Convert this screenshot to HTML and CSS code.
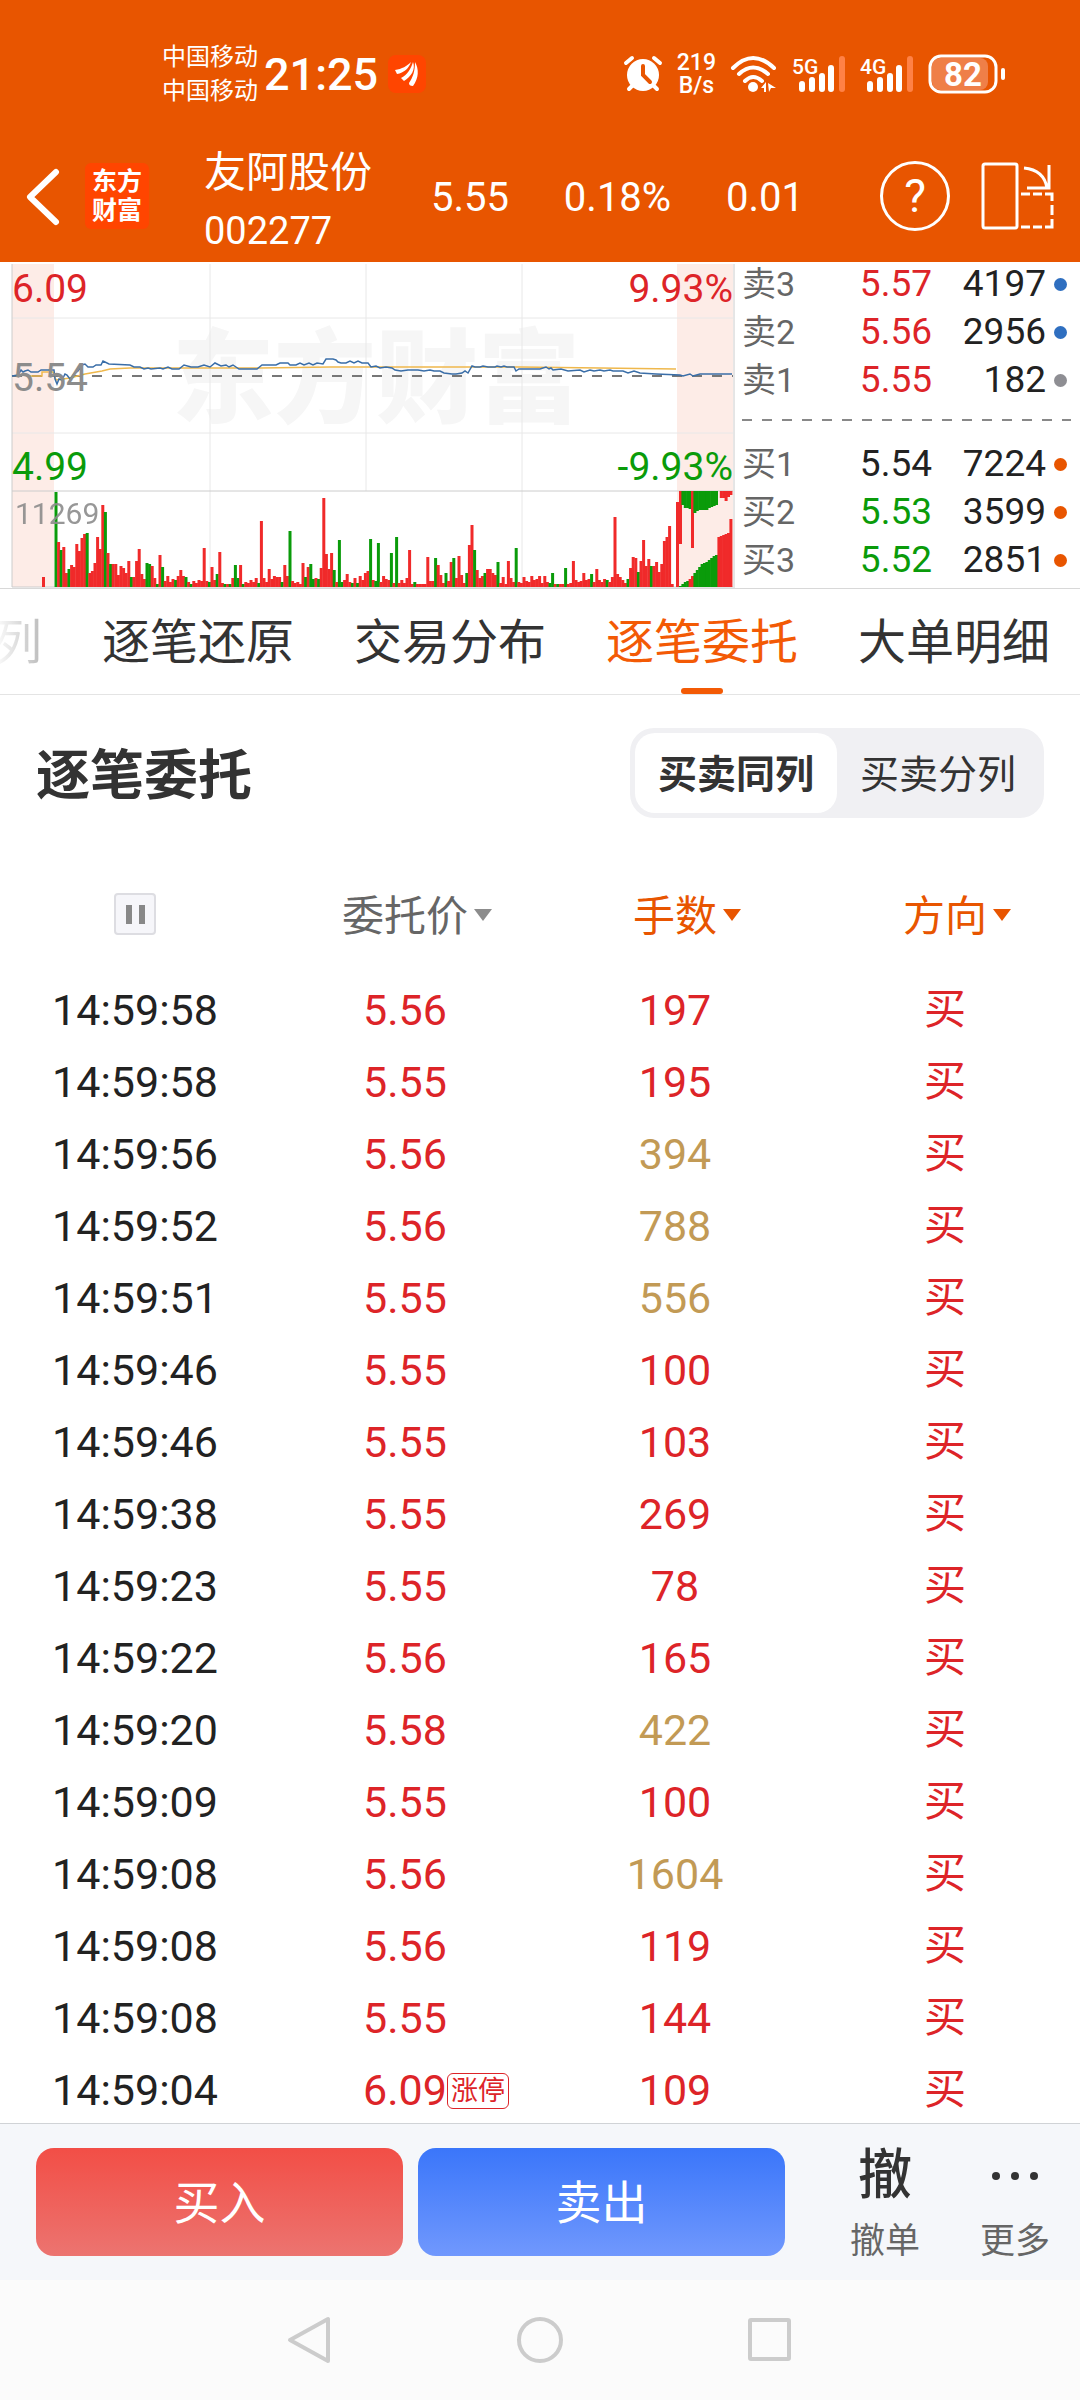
FILE: index.html
```html
<!DOCTYPE html>
<html lang="zh-CN">
<head>
    <meta charset="UTF-8">
    <meta name="viewport" content="width=device-width, initial-scale=1.0">
    <title>友阿股份 002277</title>
    <link rel="stylesheet" href="styles.css">
</head>
<body>
    <div class="status-bar">
        <div class="carriers">
            <span>中国移动</span>
            <span>中国移动</span>
        </div>
        <span class="clock">21:25</span>
        <svg class="app-badge" width="38" height="38" viewBox="0 0 38 38">
            <rect width="38" height="38" rx="8" fill="#ff4500"/>
            <path d="M7 15C14 14 19 11 23 7C21 13 16 18 9 19Z" fill="#fff"/>
            <path d="M13 23C19 20 23 14 25 7C28 14 23 22 16 26Z" fill="#fff"/>
            <path d="M21 28C25 22 27 16 27 7C31 14 31 23 25 31C22 31 21 30 21 28Z" fill="#fff"/>
        </svg>

        <div class="status-icons">
            <svg width="40" height="40" viewBox="0 0 40 40">
                <circle cx="20" cy="21" r="16" fill="#fff"/>
                <path d="M3 9L9 4M37 9L31 4M9 32L6 35M31 32L34 35" stroke="#fff" stroke-width="4" stroke-linecap="round"/>
                <path d="M20 12V21L27 28" fill="none" stroke="#e85500" stroke-width="4" stroke-linecap="round"/>
            </svg>
            <div class="net-speed">
                <span>219</span>
                <span>B/s</span>
            </div>
            <svg width="48" height="40" viewBox="0 0 48 40">
                <g fill="none" stroke="#fff" stroke-width="4" stroke-linecap="round">
                    <path d="M3 14Q23 -6 44 14"/>
                    <path d="M9 20Q23 7 38 20"/>
                    <path d="M15 27Q23 19 32 27"/>
                </g>
                <circle cx="23" cy="33" r="5" fill="#fff"/>
                <path d="M31 34L36 28V38H34V34ZM38 29L46 34H41L39 38Z" fill="#fff"/>
            </svg>
            <svg class="signal" width="54" height="40" viewBox="0 0 54 40">
                <text x="0" y="20">5G</text>
                <path d="M10 30V35M20 26V35M30 22V35M39 14V35" stroke="#fff" stroke-width="6" stroke-linecap="round"/>
                <path d="M50 5V35" stroke="#ff8146" stroke-width="6" stroke-linecap="round"/>
            </svg>
            <svg class="signal" width="54" height="40" viewBox="0 0 54 40">
                <text x="0" y="20">4G</text>
                <path d="M10 30V35M20 26V35M30 22V35M39 14V35" stroke="#fff" stroke-width="6" stroke-linecap="round"/>
                <path d="M50 5V35" stroke="#ff8146" stroke-width="6" stroke-linecap="round"/>
            </svg>
            <svg class="battery" width="78" height="40" viewBox="0 0 78 40">
                <rect x="4" y="4" width="56" height="32" rx="8" fill="#ef7f48"/>
                <rect x="2" y="2" width="66" height="36" rx="11" fill="none" stroke="#fff" stroke-width="3"/>
                <rect x="73" y="14" width="4" height="12" rx="2" fill="#fff"/>
                <text x="35" y="32" text-anchor="middle">82</text>
            </svg>
        </div>
    </div>

    <header class="stock-header">
        <button class="icon-button back" aria-label="返回">
            <svg width="36" height="60" viewBox="0 0 36 60"><path d="M32 6L6 31L32 56" fill="none" stroke="#fff" stroke-width="6" stroke-linecap="round" stroke-linejoin="round"/></svg>
        </button>
        <div class="brand"><span>东方</span><span>财富</span></div>
        <div class="stock-name">
            <h1>友阿股份</h1>
            <span>002277</span>
        </div>
        <div class="quote">
            <span>5.55</span>
            <span>0.18%</span>
            <span>0.01</span>
        </div>
        <button class="icon-button help" aria-label="帮助">?</button>
        <button class="icon-button rotate" aria-label="横屏">
            <svg width="76" height="70" viewBox="0 0 76 70">
                <g fill="none" stroke="#fff" stroke-width="3">
                    <rect x="3" y="3" width="34" height="64" rx="2"/>
                    <path d="M44 7Q64 9 67 27M47 27H69V4"/>
                    <path d="M41 33H50M53 33H62M65 33H72V40M72 44V54M72 58V66H65M62 66H53M50 66H41"/>
                </g>
            </svg>
        </button>
    </header>

    <section class="market">
        <svg class="chart" viewBox="0 0 735 326">
            <rect class="auction" x="12" y="2" width="42" height="323"/>
            <rect class="auction" x="677" y="2" width="56" height="323"/>
            <text class="watermark" x="172" y="153">东方财富</text>
            <path class="grid" d="M12 56H733M12 171H733M210 2V229M366 2V229M522 2V325M210 229V325"/>
            <path class="grid-strong" d="M12 2V325M12 229H733M12 325H733M734 2V326"/>
            <path class="prev-close" d="M12 114H733"/>
            <polyline class="average" points="28,114 42,114 42,110 53,110 56,118 70,116 85,112 102,109 110,107 130,106 260,106 330,105 370,105 520,105 600,106 676,107"/>
            <polyline class="price" points="12,114 18,113 21,108 23,110 25,109 28,108 31,110 38,110 41,108 54,108 55,117 57,122 59,117 62,118 65,112 67,113 70,117 74,112 78,109 82,103 85,102 88,105 93,105 96,103 101,103 103,99 109,102 130,103 134,105 140,105 144,107 148,106 151,107 160,106 163,107 168,105 172,107 179,107 184,103 191,105 198,105 204,103 210,105 215,101 221,104 226,103 229,105 233,103 239,107 257,107 262,103 276,103 280,101 288,101 290,103 296,103 300,101 304,103 309,101 313,103 317,101 323,102 326,97 333,97 336,98 338,100 341,101 346,101 350,99 354,101 358,99 362,101 368,101 371,105 376,104 380,106 386,105 392,106 395,108 401,109 408,108 418,108 424,109 430,108 434,109 440,109 444,111 452,112 456,112 462,111 465,109 468,111 472,104 475,105 480,105 483,104 488,105 495,105 497,104 501,105 504,104 507,105 514,105 516,109 519,107 540,107 546,105 549,107 551,106 553,108 561,107 568,109 580,108 584,110 590,108 594,109 600,108 604,109 610,108 613,109 623,109 628,111 634,109 640,111 656,112 680,113 683,114 690,112 693,114 700,112 732,112"/>
            <g id="volume"></g>
            <text class="axis up" x="12" y="40">6.09</text>
            <text class="axis flat" x="12" y="129">5.54</text>
            <text class="axis down" x="12" y="218">4.99</text>
            <text class="axis up" x="733" y="40" text-anchor="end">9.93%</text>
            <text class="axis down" x="733" y="218" text-anchor="end">-9.93%</text>
            <text class="volume-max" x="15" y="262">11269</text>
        </svg>

        <div class="order-book">
            <ul>
                <li><span class="level">卖3</span><span class="up">5.57</span><span>4197</span><i class="dot blue"></i></li>
                <li><span class="level">卖2</span><span class="up">5.56</span><span>2956</span><i class="dot blue"></i></li>
                <li><span class="level">卖1</span><span class="up">5.55</span><span>182</span><i class="dot gray"></i></li>
            </ul>
            <div class="book-divider"></div>
            <ul>
                <li><span class="level">买1</span><span>5.54</span><span>7224</span><i class="dot"></i></li>
                <li><span class="level">买2</span><span class="down">5.53</span><span>3599</span><i class="dot"></i></li>
                <li><span class="level">买3</span><span class="down">5.52</span><span>2851</span><i class="dot"></i></li>
            </ul>
        </div>
    </section>

    <nav class="tabs">
        <a href="#" class="faded">列</a>
        <a href="#">逐笔还原</a>
        <a href="#">交易分布</a>
        <a href="#" class="active">逐笔委托</a>
        <a href="#">大单明细</a>
    </nav>

    <main class="orders">
        <div class="orders-title">
            <h2>逐笔委托</h2>
            <div class="segmented">
                <button class="selected">买卖同列</button>
                <button>买卖分列</button>
            </div>
        </div>

        <table>
            <thead>
                <tr>
                    <th><button class="pause" aria-label="暂停"></button></th>
                    <th><button class="sort">委托价</button></th>
                    <th><button class="sort on">手数</button></th>
                    <th><button class="sort on">方向</button></th>
                </tr>
            </thead>
            <tbody>
                <tr><td>14:59:58</td><td>5.56</td><td>197</td><td>买</td></tr>
                <tr><td>14:59:58</td><td>5.55</td><td>195</td><td>买</td></tr>
                <tr><td>14:59:56</td><td>5.56</td><td class="large">394</td><td>买</td></tr>
                <tr><td>14:59:52</td><td>5.56</td><td class="large">788</td><td>买</td></tr>
                <tr><td>14:59:51</td><td>5.55</td><td class="large">556</td><td>买</td></tr>
                <tr><td>14:59:46</td><td>5.55</td><td>100</td><td>买</td></tr>
                <tr><td>14:59:46</td><td>5.55</td><td>103</td><td>买</td></tr>
                <tr><td>14:59:38</td><td>5.55</td><td>269</td><td>买</td></tr>
                <tr><td>14:59:23</td><td>5.55</td><td>78</td><td>买</td></tr>
                <tr><td>14:59:22</td><td>5.56</td><td>165</td><td>买</td></tr>
                <tr><td>14:59:20</td><td>5.58</td><td class="large">422</td><td>买</td></tr>
                <tr><td>14:59:09</td><td>5.55</td><td>100</td><td>买</td></tr>
                <tr><td>14:59:08</td><td>5.56</td><td class="large">1604</td><td>买</td></tr>
                <tr><td>14:59:08</td><td>5.56</td><td>119</td><td>买</td></tr>
                <tr><td>14:59:08</td><td>5.55</td><td>144</td><td>买</td></tr>
                <tr><td>14:59:04</td><td><span class="tagged">6.09<span class="tag">涨停</span></span></td><td>109</td><td>买</td></tr>
            </tbody>
        </table>
    </main>

    <footer class="trade-bar">
        <button class="trade buy">买入</button>
        <button class="trade sell">卖出</button>
        <div class="actions">
            <button class="action"><span class="action-icon">撤</span><span>撤单</span></button>
            <button class="action">
                <span class="action-icon"><svg width="48" height="10" viewBox="0 0 48 10"><g fill="#333"><circle cx="5" cy="5" r="4"/><circle cx="24" cy="5" r="4"/><circle cx="43" cy="5" r="4"/></g></svg></span>
                <span>更多</span>
            </button>
        </div>
    </footer>

    <div class="system-nav">
        <svg viewBox="0 0 48 48"><path d="M42 3V45L4 24Z"/></svg>
        <svg viewBox="0 0 48 48"><circle cx="24" cy="24" r="21"/></svg>
        <svg viewBox="0 0 48 48"><rect x="4" y="4" width="39" height="39" rx="1"/></svg>
    </div>

    <script src="chart.js"></script>
</body>
</html>
```
FILE: styles.css
```css
* {
    box-sizing: border-box;
}

body {
    margin: 0;
    height: 100vh;
    display: flex;
    flex-direction: column;
    overflow: hidden;
    font-family: Roboto, "Noto Sans CJK SC", sans-serif;
    color: #222222;
    background: #ffffff;
}

h1, h2, ul {
    margin: 0;
    padding: 0;
    font-weight: normal;
}

button {
    padding: 0;
    border: none;
    background: none;
    color: inherit;
    font-family: inherit;
    cursor: pointer;
}

.up {
    color: #dd2428;
    fill: #dd2428;
}

.down {
    color: #0a9b0a;
    fill: #0a9b0a;
}

/* status bar */
.status-bar {
    display: flex;
    align-items: center;
    flex-shrink: 0;
    height: 148px;
    padding: 0 74px 0 162px;
    background: #e85500;
    color: #ffffff;
}

.carriers {
    display: flex;
    flex-direction: column;
    font-size: 24px;
    line-height: 34px;
}

.clock {
    margin-left: 6px;
    font-size: 45px;
    font-weight: 500;
}

.app-badge {
    margin-left: 10px;
}

.status-icons {
    display: flex;
    align-items: center;
    gap: 14px;
    margin-left: auto;
}

.net-speed {
    display: flex;
    flex-direction: column;
    align-items: center;
    font-size: 23px;
    line-height: 23px;
    font-weight: 500;
}

.signal text {
    font-size: 21px;
    font-weight: 500;
    fill: #ffffff;
}

.battery text {
    font-size: 33px;
    font-weight: bold;
    fill: #ffffff;
}

/* stock header */
.stock-header {
    display: flex;
    align-items: center;
    flex-shrink: 0;
    height: 114px;
    padding: 0 24px 18px;
    background: #e85500;
    color: #ffffff;
}

.icon-button {
    display: flex;
    align-items: center;
    justify-content: center;
}

.brand {
    display: flex;
    flex-direction: column;
    align-items: center;
    justify-content: center;
    width: 64px;
    height: 66px;
    margin-left: 25px;
    border-radius: 6px;
    background: #ff4500;
    font-size: 25px;
    line-height: 29px;
    font-weight: bold;
}

.stock-name {
    display: flex;
    flex-direction: column;
    margin-left: 55px;
    padding-top: 10px;
    font-size: 38px;
    line-height: 56px;
}

.stock-name h1 {
    font-size: 42px;
    line-height: 60px;
}

.quote {
    display: flex;
    flex: 1;
    justify-content: space-between;
    margin: 2px 76px 0 59px;
    font-size: 40px;
}

.help {
    width: 70px;
    height: 70px;
    border: 3px solid #ffffff;
    border-radius: 50%;
    font-size: 46px;
}

.rotate {
    margin-left: 30px;
}

/* chart and order book */
.market {
    display: grid;
    grid-template-columns: 735fr 345fr;
    flex-shrink: 0;
    border-bottom: 1px solid #d8d8d8;
}

.chart {
    display: block;
    width: 100%;
}

.auction {
    fill: #fdece7;
}

.watermark {
    font-size: 102px;
    font-weight: 900;
    fill: #f6f6f6;
}

.grid {
    fill: none;
    stroke: #e8e8e8;
}

.grid-strong {
    fill: none;
    stroke: #cccccc;
}

.prev-close {
    stroke: #777777;
    stroke-width: 2;
    stroke-dasharray: 10 10;
}

.average {
    fill: none;
    stroke: #efb84c;
    stroke-width: 1.5;
}

.price {
    fill: none;
    stroke: #3a6ea8;
    stroke-width: 1.5;
}

.axis {
    font-size: 39px;
}

.flat {
    fill: #8c8c8c;
}

.volume-max {
    font-size: 30px;
    fill: #8c8c8c;
    opacity: 0.9;
}

.bar-up {
    fill: #f02a2a;
}

.bar-down {
    fill: #0a9b0a;
}

.order-book {
    display: flex;
    flex-direction: column;
    justify-content: flex-end;
    height: 326px;
    padding: 0 13px 4px 7px;
    overflow: hidden;
    font-size: 37px;
}

.order-book li {
    display: grid;
    grid-template-columns: 80px 1fr 114px 21px;
    align-items: center;
    height: 48px;
    line-height: 48px;
    text-align: right;
}

.order-book .level {
    color: #666666;
    font-size: 34px;
    text-align: left;
}

.dot {
    justify-self: end;
    width: 13px;
    height: 13px;
    border-radius: 50%;
    background: #e85500;
}

.dot.blue {
    background: #2f6fc0;
}

.dot.gray {
    background: #8e8e93;
}

.book-divider {
    flex-shrink: 0;
    height: 2px;
    margin: 15px -4px 19px 0;
    background: repeating-linear-gradient(to right, #888888 0 10px, transparent 10px 20px);
}

/* tabs */
.tabs {
    display: flex;
    flex-shrink: 0;
    gap: 60px;
    height: 106px;
    padding-right: 28px;
    overflow: hidden;
    border-bottom: 1px solid #e4e4e4;
}

.tabs a {
    position: relative;
    flex-shrink: 0;
    color: #333333;
    font-size: 48px;
    line-height: 108px;
    text-decoration: none;
}

.tabs .faded {
    margin-left: -6px;
    background: linear-gradient(to right, #ffffff, #bbbbbb);
    background-clip: text;
    color: transparent;
}

.tabs .active {
    color: #f35a05;
}

.tabs .active::after {
    content: "";
    position: absolute;
    left: 50%;
    bottom: 0;
    width: 42px;
    height: 6px;
    margin-left: -21px;
    border-radius: 3px;
    background: #f35a05;
}

/* order list */
.orders {
    flex: 1;
    min-height: 0;
    overflow: hidden;
}

.orders-title {
    display: flex;
    align-items: center;
    justify-content: space-between;
    padding: 33px 36px 36px;
}

.orders-title h2 {
    color: #333333;
    font-size: 54px;
    line-height: 80px;
    padding-top: 8px;
    font-weight: bold;
}

.segmented {
    display: flex;
    padding: 5px;
    border-radius: 24px;
    background: #f0f0f3;
}

.segmented button {
    width: 202px;
    height: 80px;
    padding-bottom: 4px;
    border-radius: 20px;
    color: #333333;
    font-size: 39px;
}

.segmented .selected {
    background: #ffffff;
    font-weight: 600;
}

table {
    width: 100%;
    border-collapse: collapse;
    table-layout: fixed;
}

th {
    height: 120px;
    padding: 0;
    font-weight: normal;
}

.pause {
    display: block;
    width: 42px;
    height: 42px;
    margin: 0 auto;
    border: 2px solid #dddde2;
    border-radius: 4px;
    background: linear-gradient(to right, #888888 0 6px, transparent 6px 13px, #888888 13px) center / 19px 19px no-repeat #f6f6fa;
}

.sort {
    position: relative;
    padding-bottom: 4px;
    color: #666666;
    font-size: 42px;
}

.sort::after {
    content: "";
    position: absolute;
    left: 100%;
    top: 50%;
    margin: -5px 0 0 6px;
    border: 9px solid transparent;
    border-top: 12px solid #8c8c8c;
    border-bottom: none;
}

.sort.on {
    color: #e85500;
}

.sort.on::after {
    border-top-color: #e85500;
}

td {
    height: 72px;
    padding: 0;
    color: #dd2428;
    font-size: 43px;
    line-height: 72px;
    text-align: center;
}

td:first-child {
    color: #222222;
}

td:last-child {
    font-size: 42px;
}

td.large {
    color: #c29a55;
}

.tagged {
    position: relative;
}

.tag {
    position: absolute;
    left: 100%;
    top: 50%;
    width: 62px;
    height: 36px;
    margin-top: -17px;
    border: 1px solid #dd2428;
    border-radius: 6px;
    font-size: 27px;
    line-height: 34px;
}

/* bottom bar */
.trade-bar {
    display: flex;
    align-items: flex-start;
    gap: 15px;
    flex-shrink: 0;
    height: 157px;
    padding: 24px 0 0 36px;
    border-top: 1px solid #d0d3d6;
    background: #f5f7fa;
}

.trade {
    flex: 1;
    height: 108px;
    padding-bottom: 6px;
    border-radius: 18px;
    color: #ffffff;
    font-size: 46px;
}

.buy {
    background: linear-gradient(#f24e46, #ec7470);
}

.sell {
    background: linear-gradient(#3a76fa, #7098fd);
}

.actions {
    display: flex;
    margin-left: 20px;
}

.action {
    display: flex;
    flex-direction: column;
    align-items: center;
    width: 130px;
    color: #666666;
    font-size: 35px;
    line-height: 50px;
}

.action-icon {
    display: flex;
    align-items: center;
    height: 66px;
    margin: -5px 0 8px;
    color: #333333;
    font-size: 54px;
    font-weight: 500;
}

.system-nav {
    display: flex;
    align-items: center;
    justify-content: center;
    gap: 182px;
    flex-shrink: 0;
    height: 120px;
    background: #fbfbfb;
}

.system-nav svg {
    width: 48px;
    height: 48px;
    fill: none;
    stroke: #cccccc;
    stroke-width: 4;
    stroke-linejoin: round;
}
```
FILE: chart.js
```javascript
// minute volumes, negative = falling minute
const volumes = [
    -95, 45, -37, 40, 14, -18, 22, 20, 43, 36, 49, 53, -54, 14, 16, 24, 50, 38, 82, -75,
    34, -23, 23, 23, 12, 21, 19, 14, 26, -10, 10, 26, 38, 13, 8, -24, -23, 21, 9, -3,
    32, -20, 6, 11, 5, 8, -7, 11, 17, 11, -10, 5, -3, 6, 4, 7, 6, 39, 6, -5,
    20, 7, -13, 35, 4, -3, 3, -3, 9, -22, -9, 22, -3, 5, 4, 7, 5, 9, -4, 66,
    9, 5, 18, 8, 11, 10, 10, -5, 22, 11, -56, 6, 4, 5, 3, 24, -10, 20, -23, -8,
    9, -8, 19, 89, 33, 18, 34, -17, 5, -47, -5, 7, 13, 5, -4, 9, -4, 11, 7, 14,
    16, -48, 7, -6, -44, 5, 11, 8, 7, -34, 4, -50, 4, 7, 4, 9, 37, 3, -5, 3,
    3, 3, 3, 30, 6, 6, -29, 22, 12, 4, -14, 6, 25, -29, 9, 31, 12, 4, -14, 42,
    62, -37, 17, 9, 11, -14, 18, 18, 14, 12, -25, 4, 10, 3, 26, 9, 5, -39, 5, 4,
    10, 6, 5, 11, 7, 8, 11, 4, 11, 5, -4, -14, 3, -3, 3, 3, -19, 3, 4, 26,
    7, 5, 6, 14, 7, 8, -13, 5, 18, 7, 5, 8, -7, 5, 10, 70, 13, 10, 7, 4,
    -8, 19, 30, 29, -15, 26, 47, 21, 28, -21, 21, 25, 15, 23, 46, 50, 61, 3
];

// closing auction: unmatched volume hangs from the top, matched grows from the bottom
const unmatched = [53, -14, -17, -17, -18, 57, -22, -20, -19, -19, -19, -19, -17, -16, -15, -14, 0, 7, 7, 10, 6, 4];
const matched = [-1, -3, -5, -6, 8, 11, -14, -17, -20, -23, -24, -25, -27, -29, -31, -32, 50, 51, 52, 53, 54, 68];

const BASE = 325;
const TOP = 229;
const volume = document.getElementById('volume');

function addBar(x, y, width, height, value) {
    const bar = document.createElementNS('http://www.w3.org/2000/svg', 'rect');
    bar.setAttribute('x', x);
    bar.setAttribute('y', y);
    bar.setAttribute('width', width);
    bar.setAttribute('height', height);
    bar.setAttribute('class', value < 0 ? 'bar-down' : 'bar-up');
    volume.appendChild(bar);
}

addBar(42, BASE - 10, 3, 10, 1);
volumes.forEach((v, i) => addBar(54.5 + i * 2.6, BASE - Math.abs(v), 3, Math.abs(v), v));

addBar(676, BASE - 85, 3, 85, 1);
unmatched.forEach((v, i) => addBar(679 + i * 2.4, TOP, 3, Math.abs(v), v));
matched.forEach((v, i) => addBar(679 + i * 2.4, BASE - Math.abs(v), 3, Math.abs(v), v));
```
